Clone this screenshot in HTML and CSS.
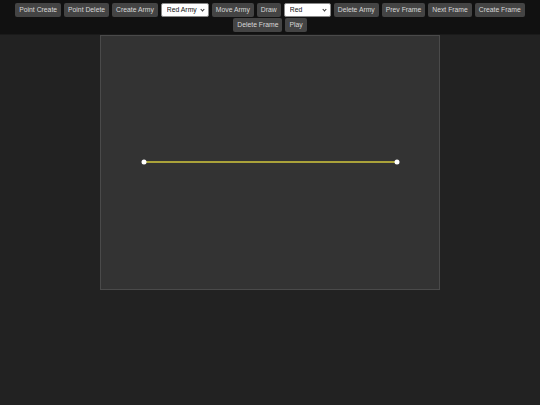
FILE: index.html
```html
<!DOCTYPE html>
<html>
<head>
<meta charset="utf-8">
<link rel="stylesheet" href="styles.css">
</head>
<body>
<div class="toolbar">
  <button class="btn">Point Create</button>
  <button class="btn">Point Delete</button>
  <button class="btn">Create Army</button>
  <span class="selwrap sel-army"><select class="sel"><option>Red Army</option></select></span>
  <button class="btn">Move Army</button>
  <button class="btn">Draw</button>
  <span class="selwrap sel-color"><select class="sel"><option>Red</option></select></span>
  <button class="btn">Delete Army</button>
  <button class="btn">Prev Frame</button>
  <button class="btn">Next Frame</button>
  <button class="btn">Create Frame</button>
  <button class="btn">Delete Frame</button>
  <button class="btn">Play</button>
</div>
<div class="stage">
  <div class="canvas">
    <svg class="drawing" width="338" height="253" viewBox="0 0 338 253">
      <line x1="43" y1="126" x2="296" y2="126" stroke="#aaa23a" stroke-width="2"/>
      <circle cx="43" cy="126" r="2.5" fill="#ffffff"/>
      <circle cx="296" cy="126" r="2.5" fill="#ffffff"/>
    </svg>
  </div>
</div>
</body>
</html>
```
FILE: styles.css
```css
html, body {
  margin: 0;
  padding: 0;
  background: #222222;
  font-family: "Liberation Sans", Arial, sans-serif;
}
.toolbar {
  background: #111111;
  display: flex;
  flex-wrap: wrap;
  justify-content: center;
  align-content: flex-start;
  gap: 1px 3px;
  padding: 3px 8px 0;
  height: 31px;
  border-bottom: 1px solid #1a1a1a;
}
.btn {
  height: 14px;
  margin: 0;
  padding: 0 4px;
  background: #444444;
  color: #d8d8d8;
  border: none;
  border-radius: 2px;
  font-family: "Liberation Sans", Arial, sans-serif;
  font-size: 6.8px;
  line-height: 14px;
}
.selwrap {
  position: relative;
  display: block;
  height: 14px;
}
.selwrap::after {
  content: "";
  position: absolute;
  right: 5px;
  top: 5px;
  width: 2px;
  height: 2px;
  border-right: 1px solid #333;
  border-bottom: 1px solid #333;
  transform: rotate(45deg);
  pointer-events: none;
}
.sel {
  -webkit-appearance: none;
  appearance: none;
  display: block;
  width: 100%;
  height: 14px;
  margin: 0;
  padding: 0 0 0 5px;
  background: #ffffff;
  color: #111111;
  border: 1px solid #888;
  border-radius: 2px;
  font-family: "Liberation Sans", Arial, sans-serif;
  font-size: 6.8px;
  line-height: 12px;
}
.sel-army { width: 48px; }
.sel-color { width: 47px; }
.stage {
  display: flex;
  justify-content: center;
}
.canvas {
  width: 338px;
  height: 253px;
  background: #333333;
  border: 1px solid #4a4a4a;
}
.drawing {
  display: block;
}
```
